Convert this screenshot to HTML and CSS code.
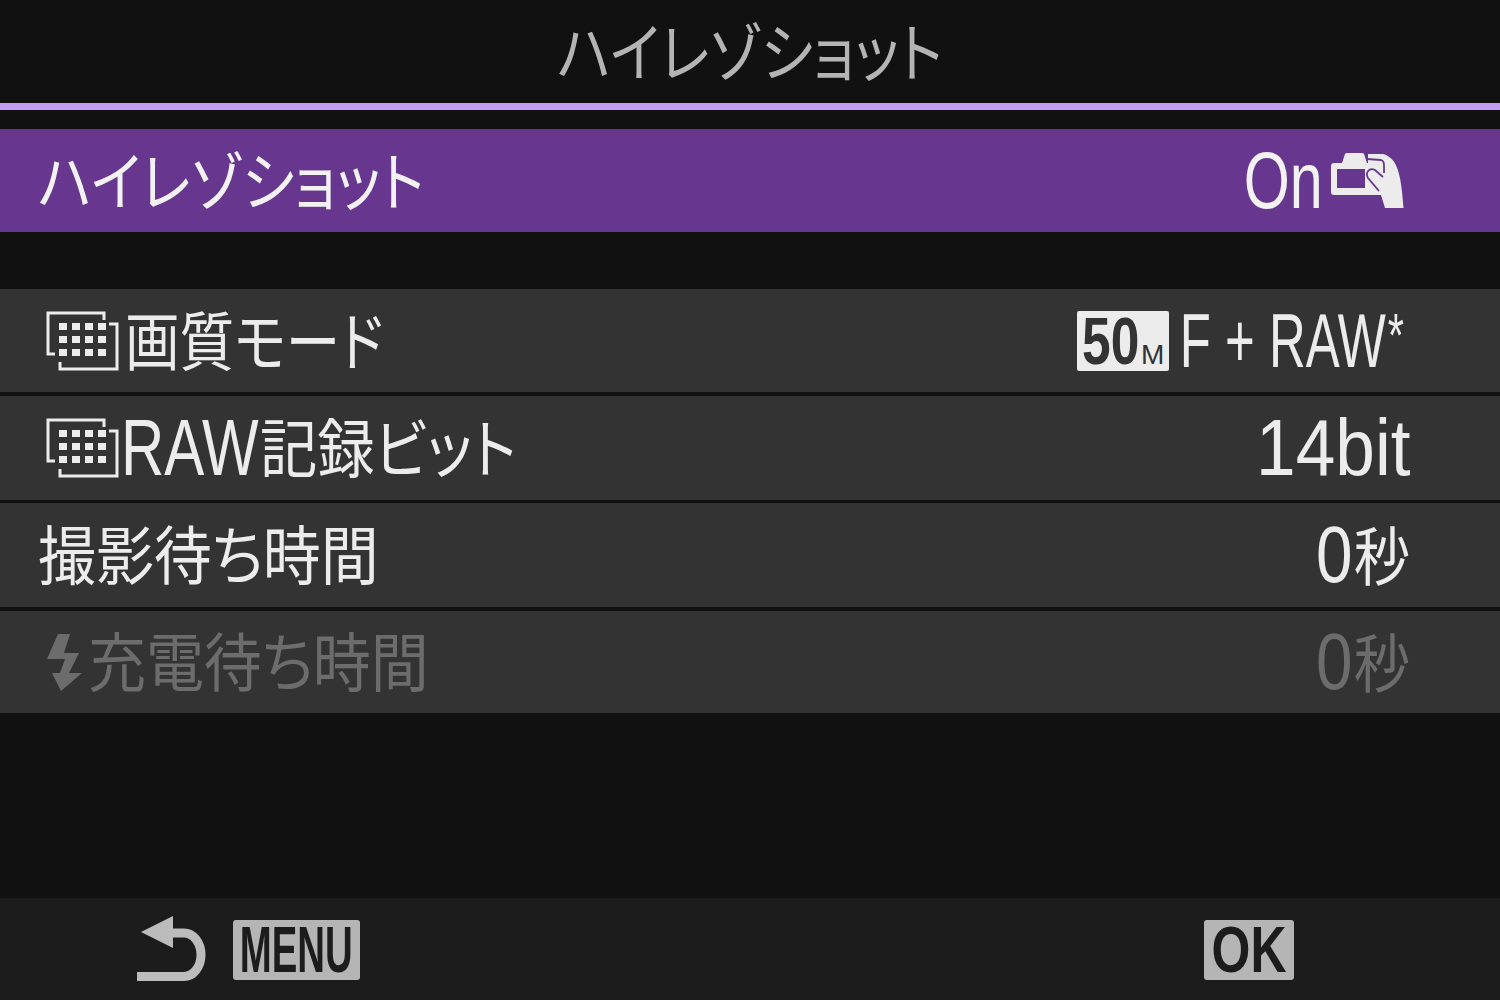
FILE: index.html
```html
<!DOCTYPE html>
<html lang="ja">
<head>
<meta charset="utf-8">
<title>ハイレゾショット</title>
<link rel="stylesheet" href="styles.css">
</head>
<body>
<div class="screen">
  <header class="title"><span class="kana">ハイレゾショット</span></header>
  <div class="accent"></div>
  <div class="row selected">
    <span class="label"><span class="kana">ハイレゾショット</span></span>
    <span class="value on"><span class="latin">On</span>
      <svg class="hand" viewBox="0 0 73 58"><path d="M3 11H11L14 2Q14.500 1 16 1H31Q32.500 1 33 2L36 11H37V2H52C66 6 70 20 72.500 56H54L50 43H3Q0 43 0 40V14Q0 11 3 11Z"/><path class="screen-cut" d="M6 17H34V36H6Z"/><path class="finger" d="M36 7L50 8Q53 9 53 13V21M52 25L44 18C38 15 34 21 37 26L48 39"/></svg>
    </span>
  </div>
  <div class="group">
    <div class="row first">
      <span class="label"><svg class="grid" viewBox="0 0 74 60"><path d="M9 43H2V2H58V9"/><path d="M63 13H71V58H14V51"/><g><rect x="13" y="12" width="8" height="7"/><rect x="26" y="12" width="8" height="7"/><rect x="39" y="12" width="8" height="7"/><rect x="52" y="12" width="8" height="7"/><rect x="13" y="25" width="8" height="7"/><rect x="26" y="25" width="8" height="7"/><rect x="39" y="25" width="8" height="7"/><rect x="52" y="25" width="8" height="7"/><rect x="13" y="38" width="8" height="7"/><rect x="26" y="38" width="8" height="7"/><rect x="39" y="38" width="8" height="7"/><rect x="52" y="38" width="8" height="7"/></g></svg><span class="jp">画質モード</span></span>
      <span class="value quality"><span class="badge"><span class="fifty">50</span><small>M</small></span><span class="latin"><span>F + RAW<sup>*</sup></span></span></span>
    </div>
    <div class="row second">
      <span class="label"><svg class="grid" viewBox="0 0 74 60"><path d="M9 43H2V2H58V9"/><path d="M63 13H71V58H14V51"/><g><rect x="13" y="12" width="8" height="7"/><rect x="26" y="12" width="8" height="7"/><rect x="39" y="12" width="8" height="7"/><rect x="52" y="12" width="8" height="7"/><rect x="13" y="25" width="8" height="7"/><rect x="26" y="25" width="8" height="7"/><rect x="39" y="25" width="8" height="7"/><rect x="52" y="25" width="8" height="7"/><rect x="13" y="38" width="8" height="7"/><rect x="26" y="38" width="8" height="7"/><rect x="39" y="38" width="8" height="7"/><rect x="52" y="38" width="8" height="7"/></g></svg><span class="raw">RAW</span><span class="jp">記録ビット</span></span>
      <span class="value bits"><span class="latin">14bit</span></span>
    </div>
    <div class="row third">
      <span class="label"><span class="jp">撮影待ち時間</span></span>
      <span class="value seconds"><span class="latin">0</span><span class="byo">秒</span></span>
    </div>
    <div class="row fourth disabled">
      <span class="label"><svg class="bolt" viewBox="0 0 36 60"><path d="M11 2H23L17 21H32L22 41H35L14 59L5 41H13L18 27H0Z"/></svg><span class="jp">充電待ち時間</span></span>
      <span class="value seconds"><span class="latin">0</span><span class="byo">秒</span></span>
    </div>
  </div>
  <footer class="footer">
    <div class="back">
      <svg class="arrow" viewBox="0 0 70 67"><path class="head" d="M4 17L36 1V33Z"/><path class="tail" d="M34 18H47A17 21.750 0 0 1 47 61.500H0"/></svg>
      <span class="key menu"><span class="keytext">MENU</span></span>
    </div>
    <span class="key ok"><span class="keytext">OK</span></span>
  </footer>
</div>
</body>
</html>
```

FILE: styles.css
```css
* { box-sizing: border-box; }
html, body { margin: 0; padding: 0; }
body { width: 1500px; height: 1000px; overflow: hidden; background: #111; }
.screen {
  width: 1500px; height: 1000px; display: flex; flex-direction: column;
  background: #111; color: #ececec;
  font-family: "Noto Sans CJK JP", "Noto Sans", sans-serif;
  font-feature-settings: "palt";
}
.title {
  height: 103px; display: flex; align-items: center; justify-content: center;
  font-size: 64px; color: #b4b4b4; line-height: 1;
}
.title .kana { transform: scaleX(.88); transform-origin: center; }
.accent { height: 7px; background: #c49cf0; margin-bottom: 19px; }
.row {
  display: flex; align-items: center; justify-content: space-between;
  background: #333; font-size: 64px; line-height: 1;
  padding: 0 90px 0 38px; white-space: nowrap;
}
.kana { display: inline-block; padding-bottom: 8px; transform: scaleX(.882); transform-origin: left; }
.jp { display: inline-block; padding-bottom: 8px; transform: scaleX(.905); transform-origin: left; }
.first .jp { transform: scaleX(.853); }
.second .jp { transform: scaleX(.895); }
.selected { height: 103px; background: #67368f; color: #f2f2f2; padding-right: 96px; }
.group { margin-top: 57px; display: flex; flex-direction: column; }
.first { height: 103px; margin-bottom: 4px; padding-left: 46px; padding-right: 96px; }
.second { height: 104px; margin-bottom: 3px; padding-left: 46px; }
.third { height: 104px; margin-bottom: 4px; }
.fourth { height: 102px; padding-left: 47px; }
.disabled { color: #6c6c6c; }
.label, .value { display: flex; align-items: center; }
.latin {
  display: flex; justify-content: flex-end; transform-origin: right;
  font-family: "Liberation Sans", sans-serif; font-size: 80px; transform: scaleX(.76);
}
.raw {
  display: inline-block; width: 139px; margin-left: -4px; transform: scaleX(.75); transform-origin: left;
  font-family: "Liberation Sans", sans-serif; font-size: 80px;
}
.on .latin { margin-right: 8px; transform: scaleX(.74); }
.hand { width: 73px; height: 58px; fill: #ececec; }
.screen-cut { fill: #67368f; }
.finger { fill: none; stroke: #67368f; stroke-width: 1.800; }
.grid { width: 74px; height: 60px; margin-right: 5px; fill: #ececec; flex: none; }
.grid path { fill: none; stroke: #ececec; stroke-width: 3; }
.bolt { width: 36px; height: 60px; margin-right: 5px; fill: #6c6c6c; flex: none; }
.badge {
  width: 92px; height: 60px; margin-right: 9px; border-radius: 2px; padding-left: 5px;
  background: #ececec; color: #333; display: flex; align-items: baseline;
  font-family: "Liberation Sans", sans-serif; font-weight: 700; line-height: 60px;
}
.fifty { display: block; width: 59px; font-size: 66px; transform: scaleX(.78); transform-origin: left; }
.badge small { font-size: 28px; font-weight: 400; }
.quality .latin { width: 226px; font-size: 76px; transform: scaleX(.67); white-space: nowrap; }
.quality sup { font-size: 62px; line-height: 0; vertical-align: 11px; margin-left: 3px; }
.bits .latin { transform: scaleX(.89); }
.seconds .latin { transform: scaleX(.82); margin-right: 2px; }
.byo {
  display: flex; justify-content: flex-end; width: 56px; padding-bottom: 6px;
  transform: scaleX(.88); transform-origin: right;
}
.footer {
  margin-top: auto; height: 102px; background: #1c1c1c; padding: 2px 206px 0 137px;
  display: flex; align-items: center; justify-content: space-between;
}
.back { display: flex; align-items: center; gap: 26px; }
.arrow { width: 70px; height: 67px; margin-bottom: 3px; }
.head { fill: #bcbcbc; }
.tail { fill: none; stroke: #bcbcbc; stroke-width: 9; }
.key {
  height: 60px; border-radius: 3px; background: #b5b5b5; color: #1c1c1c;
  display: flex; align-items: center; justify-content: center; white-space: nowrap;
  font-family: "Liberation Sans", sans-serif; font-weight: 700; line-height: 60px;
}
.keytext { display: block; flex: none; }
.menu { width: 127px; font-size: 64px; }
.menu .keytext { transform: scaleX(.6); }
.ok { width: 90px; font-size: 64px; }
.ok .keytext { transform: scaleX(.78); }
```
